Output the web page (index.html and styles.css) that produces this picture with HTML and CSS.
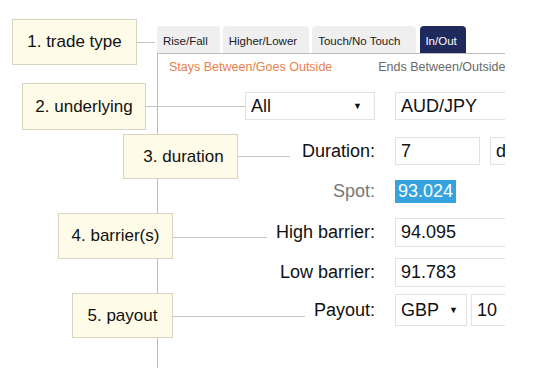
FILE: index.html
```html
<!DOCTYPE html>
<html lang="en">

<head>
  <meta charset="UTF-8">
  <meta name="viewport" content="width=device-width, initial-scale=1.0">
  <title>Trade form guide</title>

  <link rel="stylesheet" href="styles.css">
</head>

<body>
  <div class="stage">
    <section class="panel">
      <ul class="tabs">
        <li>Rise/Fall</li>
        <li>Higher/Lower</li>
        <li class="wide">Touch/No Touch</li>
        <li class="current">In/Out</li>
      </ul>

      <div class="panel-body">
        <div class="subtabs">
          <span class="sub active">Stays Between/Goes Outside</span>
          <span class="sub">Ends Between/Outside</span>
        </div>

        <div class="left">
          <div class="field select market">All <span class="caret">&#9660;</span></div>
        </div>
        <div class="right">
          <div class="field symbol">AUD/JPY</div>
        </div>

        <label class="left label">Duration:</label>
        <div class="right">
          <div class="field amount">7</div>
          <div class="field unit">d</div>
        </div>

        <label class="left label muted">Spot:</label>
        <div class="right">
          <span class="spot">93.024</span>
        </div>

        <label class="left label tall">High barrier:</label>
        <div class="right">
          <div class="field barrier">94.095</div>
        </div>

        <label class="left label tall">Low barrier:</label>
        <div class="right">
          <div class="field barrier">91.783</div>
        </div>

        <label class="left label payout-label">Payout:</label>
        <div class="right">
          <div class="field select currency">GBP <span class="caret">&#9660;</span></div>
          <div class="field stake">10</div>
        </div>
      </div>
    </section>

    <!-- guide callouts, drawn over the form -->
    <div class="link link-1"></div>
    <div class="link link-2"></div>
    <div class="link link-3"></div>
    <div class="link link-4"></div>
    <div class="link link-5"></div>

    <div class="callout callout-1">1. trade type</div>
    <div class="callout callout-2">2. underlying</div>
    <div class="callout callout-3">3. duration</div>
    <div class="callout callout-4">4. barrier(s)</div>
    <div class="callout callout-5">5. payout</div>
  </div>
</body>

</html>
```

FILE: styles.css
```css
body {
  background: #fff;
  color: #111;
  font-family: "Liberation Sans", Arial, sans-serif;
  margin: 0;
}

.stage {
  height: 386px;
  overflow: hidden;
  position: relative;
  width: 534px;
}

.panel {
  margin: 26px 0 0 157px;
  overflow: hidden;
  width: 348px;
}

.tabs {
  display: flex;
  gap: 3px;
  list-style: none;
  margin: 0;
  padding: 0;
}

.tabs li {
  background: #efefef;
  border-radius: 4px 4px 0 0;
  box-sizing: border-box;
  color: #1a1a1a;
  font-size: 11.5px;
  height: 27px;
  line-height: 23px;
  padding: 4px 12px 0 6px;
}

.tabs li.wide {
  padding-right: 16px;
}

.tabs li.current {
  background: #1f295c;
  color: #fff;
  margin-left: 1px;
  padding-left: 5px;
  padding-right: 9px;
}

.panel-body {
  border-left: 1px solid #bdbdbd;
  border-top: 1px solid #bdbdbd;
  box-sizing: border-box;
  column-gap: 20px;
  display: grid;
  grid-template-columns: 217px 1fr;
  grid-template-rows: 38px 45px 43px 38px 40px 36px 1fr;
  height: 315px;
}

.subtabs {
  display: flex;
  font-size: 12.5px;
  gap: 46px;
  grid-column: 1 / 3;
  line-height: 26px;
  padding-left: 11px;
  white-space: nowrap;
}

.sub {
  color: #6a6a6a;
}

.sub.active {
  color: #e8804c;
}

.left {
  display: flex;
  justify-content: flex-end;
}

.right {
  align-items: flex-start;
  display: flex;
  gap: 10px;
  white-space: nowrap;
}

.label {
  font-size: 18px;
  line-height: 28px;
  text-align: right;
}

.label.muted {
  color: #777;
  line-height: 23px;
}

.label.tall {
  line-height: 29px;
}

.label.payout-label {
  line-height: 32px;
}

.field {
  background: #fff;
  border: 1px solid #e2e2e2;
  box-sizing: border-box;
  flex-shrink: 0;
  font-size: 18px;
  height: 28px;
  line-height: 26px;
  padding-left: 5px;
}

.select {
  display: flex;
  justify-content: space-between;
  padding-right: 12px;
}

.caret {
  font-size: 9px;
}

.market {
  width: 130px;
}

.symbol {
  width: 150px;
}

.amount {
  width: 85px;
}

.unit {
  width: 40px;
}

.spot {
  background: #36a3df;
  color: #fff;
  font-size: 18px;
  height: 23px;
  line-height: 23px;
  padding: 0 3px;
}

.barrier {
  height: 29px;
  line-height: 27px;
  width: 150px;
}

.currency {
  height: 32px;
  line-height: 30px;
  padding-right: 8px;
  width: 72px;
}

.stake {
  height: 32px;
  line-height: 30px;
  margin-left: -6px;
  width: 60px;
}

/* callouts */

.callout {
  align-items: center;
  background: #fefce9;
  border: 1px solid #d8d4bf;
  box-sizing: border-box;
  display: flex;
  font-size: 17px;
  justify-content: center;
  position: absolute;
}

.callout-1 {
  height: 46px;
  left: 12px;
  top: 19px;
  width: 125px;
}

.callout-2 {
  height: 47px;
  left: 22px;
  top: 83px;
  width: 124px;
}

.callout-3 {
  height: 45px;
  left: 123px;
  padding-left: 6px;
  top: 134px;
  width: 115px;
}

.callout-4 {
  height: 46px;
  left: 58px;
  top: 213px;
  width: 115px;
}

.callout-5 {
  height: 45px;
  left: 72px;
  top: 293px;
  width: 101px;
}

.link {
  background: #c4c4c4;
  height: 1px;
  position: absolute;
}

.link-1 {
  left: 137px;
  top: 42px;
  width: 18px;
}

.link-2 {
  left: 146px;
  top: 106px;
  width: 99px;
}

.link-3 {
  left: 238px;
  top: 156px;
  width: 52px;
}

.link-4 {
  left: 173px;
  top: 237px;
  width: 94px;
}

.link-5 {
  left: 173px;
  top: 316px;
  width: 132px;
}
```
